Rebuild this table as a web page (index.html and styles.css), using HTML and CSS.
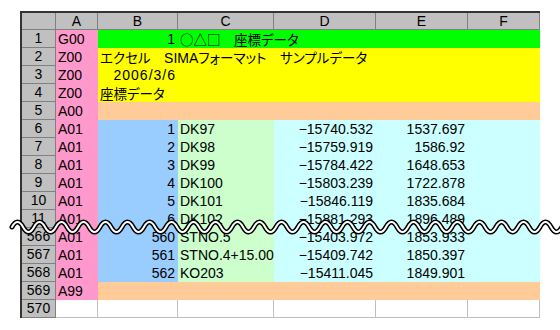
FILE: index.html
```html
<!DOCTYPE html>
<html lang="ja">
<head>
<meta charset="utf-8">
<title>SIMA sample</title>
<link rel="stylesheet" href="styles.css">
</head>
<body>
<div class="page">
  <div class="sheet">
    <div class="corner"></div>
    <div class="colhdr">A</div>
    <div class="colhdr">B</div>
    <div class="colhdr">C</div>
    <div class="colhdr">D</div>
    <div class="colhdr">E</div>
    <div class="colhdr">F</div>

    <div class="rowhdr">1</div>
    <div class="cell a">G00</div>
    <div class="cell green num">1</div>
    <div class="cell green span4"><span class="jp">○△□　座標データ</span></div>

    <div class="rowhdr">2</div>
    <div class="cell a">Z00</div>
    <div class="cell yellow span5"><span class="jp">エクセル　</span>SIMA<span class="jp">フォーマット　サンプルデータ</span></div>

    <div class="rowhdr">3</div>
    <div class="cell a">Z00</div>
    <div class="cell yellow num date">2006/3/6</div>
    <div class="cell yellow span4"></div>

    <div class="rowhdr">4</div>
    <div class="cell a">Z00</div>
    <div class="cell yellow span5"><span class="jp">座標データ</span></div>

    <div class="rowhdr">5</div>
    <div class="cell a">A00</div>
    <div class="cell peach span5"></div>

    <div class="rowhdr">6</div>
    <div class="cell a">A01</div>
    <div class="cell blue num">1</div>
    <div class="cell mint">DK97</div>
    <div class="cell cyan num">−15740.532</div>
    <div class="cell cyan num">1537.697</div>
    <div class="cell cyan"></div>

    <div class="rowhdr">7</div>
    <div class="cell a">A01</div>
    <div class="cell blue num">2</div>
    <div class="cell mint">DK98</div>
    <div class="cell cyan num">−15759.919</div>
    <div class="cell cyan num">1586.92</div>
    <div class="cell cyan"></div>

    <div class="rowhdr">8</div>
    <div class="cell a">A01</div>
    <div class="cell blue num">3</div>
    <div class="cell mint">DK99</div>
    <div class="cell cyan num">−15784.422</div>
    <div class="cell cyan num">1648.653</div>
    <div class="cell cyan"></div>

    <div class="rowhdr">9</div>
    <div class="cell a">A01</div>
    <div class="cell blue num">4</div>
    <div class="cell mint">DK100</div>
    <div class="cell cyan num">−15803.239</div>
    <div class="cell cyan num">1722.878</div>
    <div class="cell cyan"></div>

    <div class="rowhdr">10</div>
    <div class="cell a">A01</div>
    <div class="cell blue num">5</div>
    <div class="cell mint">DK101</div>
    <div class="cell cyan num">−15846.119</div>
    <div class="cell cyan num">1835.684</div>
    <div class="cell cyan"></div>

    <div class="rowhdr">11</div>
    <div class="cell a">A01</div>
    <div class="cell blue num">6</div>
    <div class="cell mint">DK102</div>
    <div class="cell cyan num">−15881.293</div>
    <div class="cell cyan num">1896.489</div>
    <div class="cell cyan"></div>

    <div class="rowhdr">566</div>
    <div class="cell a">A01</div>
    <div class="cell blue num">560</div>
    <div class="cell mint">STNO.5</div>
    <div class="cell cyan num">−15403.972</div>
    <div class="cell cyan num">1853.933</div>
    <div class="cell cyan"></div>

    <div class="rowhdr">567</div>
    <div class="cell a">A01</div>
    <div class="cell blue num">561</div>
    <div class="cell mint">STNO.4+15.00</div>
    <div class="cell cyan num">−15409.742</div>
    <div class="cell cyan num">1850.397</div>
    <div class="cell cyan"></div>

    <div class="rowhdr">568</div>
    <div class="cell a">A01</div>
    <div class="cell blue num">562</div>
    <div class="cell mint">KO203</div>
    <div class="cell cyan num">−15411.045</div>
    <div class="cell cyan num">1849.901</div>
    <div class="cell cyan"></div>

    <div class="rowhdr">569</div>
    <div class="cell a">A99</div>
    <div class="cell peach span5"></div>

    <div class="rowhdr">570</div>
    <div class="cell empty"></div>
    <div class="cell empty"></div>
    <div class="cell empty"></div>
    <div class="cell empty"></div>
    <div class="cell empty"></div>
    <div class="cell empty"></div>
  </div>

  <svg class="wave" width="560" height="24" viewBox="0 0 560 24" aria-hidden="true">
    <path class="wave-outer" d="M12 11 q5.5 -10 11 0 t11 0 t11 0 t11 0 t11 0 t11 0 t11 0 t11 0 t11 0 t11 0 t11 0 t11 0 t11 0 t11 0 t11 0 t11 0 t11 0 t11 0 t11 0 t11 0 t11 0 t11 0 t11 0 t11 0 t11 0 t11 0 t11 0 t11 0 t11 0 t11 0 t11 0 t11 0 t11 0 t11 0 t11 0 t11 0 t11 0 t11 0 t11 0 t11 0 t11 0 t11 0 t11 0 t11 0 t11 0 t11 0 t11 0 t11 0 t11 0 t11 0"/>
    <path class="wave-inner" d="M12 11 q5.5 -10 11 0 t11 0 t11 0 t11 0 t11 0 t11 0 t11 0 t11 0 t11 0 t11 0 t11 0 t11 0 t11 0 t11 0 t11 0 t11 0 t11 0 t11 0 t11 0 t11 0 t11 0 t11 0 t11 0 t11 0 t11 0 t11 0 t11 0 t11 0 t11 0 t11 0 t11 0 t11 0 t11 0 t11 0 t11 0 t11 0 t11 0 t11 0 t11 0 t11 0 t11 0 t11 0 t11 0 t11 0 t11 0 t11 0 t11 0 t11 0 t11 0 t11 0"/>
  </svg>
</div>
</body>
</html>
```

FILE: styles.css
```css
html, body {
  margin: 0;
  padding: 0;
  background: #ffffff;
}

.page {
  position: relative;
  width: 560px;
  height: 330px;
  overflow: hidden;
}

.sheet {
  display: grid;
  grid-template-columns: 34px 42px 80px 96px 102px 92px 72px;
  grid-template-rows: 17px;
  grid-auto-rows: 18px;
  width: 518px;
  margin: 11px 0 0 20px;
  border-top: 2px solid #333333;
  border-left: 2px solid #333333;
  font-family: "Liberation Sans", "Noto Sans CJK JP", sans-serif;
  font-size: 14px;
  color: #000000;
}

.corner,
.colhdr,
.rowhdr {
  box-sizing: border-box;
  background: #c0c0c0;
  border-right: 1px solid #808080;
  border-bottom: 1px solid #808080;
  text-align: center;
  line-height: 17px;
  white-space: nowrap;
}

.colhdr {
  line-height: 16px;
}

.cell {
  box-sizing: border-box;
  padding: 0 2px;
  line-height: 19px;
  white-space: nowrap;
  overflow: hidden;
}

.jp {
  font-family: "Noto Sans CJK JP", sans-serif;
  font-feature-settings: "palt";
  font-size: 13.5px;
}

.num {
  text-align: right;
  padding-right: 3px;
}

.date {
  letter-spacing: 1px;
  padding-right: 2px;
}

.span4 { grid-column: span 4; }
.span5 { grid-column: span 5; }

.a { background: #ff99cc; }
.green { background: #00ff00; }
.yellow { background: #ffff00; }
.peach { background: #ffcc99; }
.blue { background: #99ccff; }
.mint { background: #ccffcc; }
.cyan { background: #ccffff; }

.empty {
  background: #ffffff;
  border-right: 1px solid #c0c0c0;
  border-bottom: 1px solid #c0c0c0;
}

.wave {
  position: absolute;
  left: 0;
  top: 216px;
}

.wave path {
  fill: none;
  stroke-linecap: round;
}

.wave-outer {
  stroke: #000000;
  stroke-width: 5;
}

.wave-inner {
  stroke: #ffffff;
  stroke-width: 2;
}
```
